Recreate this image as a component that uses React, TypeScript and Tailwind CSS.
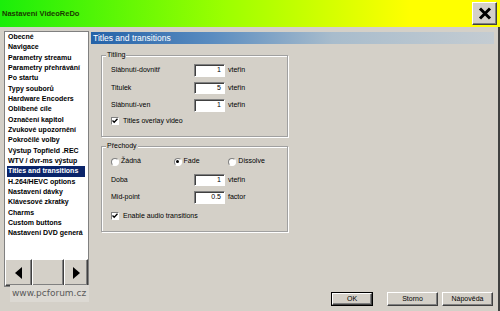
import React from "react";

const items = [
  "Obecné",
  "Navigace",
  "Parametry streamu",
  "Parametry přehrávání",
  "Po startu",
  "Typy souborů",
  "Hardware Encoders",
  "Oblíbené cíle",
  "Označení kapitol",
  "Zvukové upozornění",
  "Pokročilé volby",
  "Výstup Topfield .REC",
  "WTV / dvr-ms výstup",
  "Titles and transitions",
  "H.264/HEVC options",
  "Nastavení dávky",
  "Klávesové zkratky",
  "Charms",
  "Custom buttons",
  "Nastavení DVD generá",
];

const raised =
  "bg-[#d4d0c8] border border-t-white border-l-white border-r-[#404040] border-b-[#404040] shadow-[inset_-1px_-1px_0_#808080]";

function NumField({ label, value, unit }: { label: string; value: string; unit: string }) {
  return (
    <div className="flex items-center h-[17.5px]">
      <span className="w-[83px] pl-[9px] box-content">{label}</span>
      <div className="w-[31px] h-[12.5px] bg-white border border-t-[#808080] border-l-[#808080] border-r-white border-b-white shadow-[inset_1px_1px_0_#404040] flex items-center justify-end pr-[3px] text-[7px]">
        {value}
      </div>
      <span className="ml-[3px]">{unit}</span>
    </div>
  );
}

function Check({ label }: { label: string }) {
  return (
    <div className="flex items-center h-[14px] pl-[9px]">
      <div className="w-[8px] h-[8px] bg-white border border-t-[#808080] border-l-[#808080] border-r-white border-b-white flex items-center justify-center">
        <svg width="6" height="6" viewBox="0 0 6 6">
          <path d="M0.5 2.5 L2.2 4.3 L5.5 0.8" stroke="#000" strokeWidth="1.3" fill="none" />
        </svg>
      </div>
      <span className="ml-[4px]">{label}</span>
    </div>
  );
}

function Radio({ label, on, w }: { label: string; on?: boolean; w: string }) {
  return (
    <div className={`flex items-center ${w}`}>
      <div className="w-[8px] h-[8px] rounded-full bg-white border border-t-[#808080] border-l-[#808080] border-r-white border-b-white flex items-center justify-center">
        {on && <div className="w-[3px] h-[3px] rounded-full bg-black" />}
      </div>
      <span className="ml-[2px]">{label}</span>
    </div>
  );
}

function Group({ title, h, children }: { title: string; h: string; children: React.ReactNode }) {
  return (
    <div className={`relative ml-[10px] w-[187px] ${h} border border-[#a0a0a0] shadow-[1px_1px_0_#fff,inset_1px_1px_0_#fff]`}>
      <span className="absolute -top-[5px] left-[4px] px-[1px] bg-[#d4d0c8] leading-[8px]">{title}</span>
      {children}
    </div>
  );
}

export default function App() {
  return (
    <div className="w-[500px] h-[311px] bg-[#d4d0c8] flex flex-col overflow-hidden font-['Liberation_Sans',Arial,sans-serif] text-[7px] text-black">
      {/* Title bar */}
      <div className="h-[27px] flex items-center bg-[linear-gradient(to_right,#1aee0a_0%,#9cff00_45%,#ffff00_82%)] pl-[2px] pr-[3px]">
        <span className="font-bold text-[7.5px] text-[#1a3a00]">Nastavení VideoReDo</span>
        <div className={`ml-auto w-[25px] h-[23px] flex items-center justify-center ${raised}`}>
          <svg width="14" height="13" viewBox="0 0 14 13">
            <path d="M2 1.5 L12 11.5 M12 1.5 L2 11.5" stroke="#000" strokeWidth="3" />
          </svg>
        </div>
      </div>

      <div className="flex-1 flex pt-[4px] border-r-[2px] border-[#404040]">
        {/* Left list */}
        <div className="ml-[4px] w-[85px] shrink-0 flex flex-col">
          <div className="w-[85px] h-[256px] border border-[#808080] flex flex-col">
            <div className="h-[227px] bg-white pl-[3px] overflow-hidden">
              {items.map((it) => (
                <div
                  key={it}
                  className={`h-[10.33px] leading-[10.33px] font-bold whitespace-nowrap ${
                    it === "Titles and transitions" ? "bg-[#0a246a] text-white -ml-[1px] pl-[1px] mr-[3px]" : ""
                  }`}
                >
                  {it}
                </div>
              ))}
            </div>
            <div className="flex-1 flex">
              <div className={`w-[27px] flex items-center justify-center ${raised}`}>
                <svg width="7" height="12" viewBox="0 0 7 12">
                  <path d="M7 0 L0 6 L7 12 Z" fill="#000" />
                </svg>
              </div>
              <div className={`w-[32px] ${raised}`} />
              <div className={`flex-1 flex items-center justify-center ${raised}`}>
                <svg width="7" height="12" viewBox="0 0 7 12">
                  <path d="M0 0 L7 6 L0 12 Z" fill="#000" />
                </svg>
              </div>
            </div>
          </div>
          <div className="mt-[-2px] ml-[6px] w-[79px] h-[17px] bg-[#dcd9d3] flex items-center pl-[2px] whitespace-nowrap font-['DejaVu_Sans',sans-serif] text-[9px] text-[#5a5a5a]">
            www.pcforum.cz
          </div>
        </div>

        {/* Right pane */}
        <div className="ml-[2px] w-[403px] flex flex-col">
          <div className="h-[12px] mt-[1px] bg-[linear-gradient(to_right,#2462a8_0%,#5a8cc0_30%,#a8bccc_60%,#c4ccd2_100%)] text-white text-[8.5px] leading-[12px] pl-[2px]">
            Titles and transitions
          </div>

          <div className="mt-[11px]">
            <Group title="Titling" h="h-[82px]">
              <div className="pt-[5.5px]">
                <NumField label="Slábnutí-dovnitř" value="1" unit="vteřin" />
                <NumField label="Titulek" value="5" unit="vteřin" />
                <NumField label="Slábnutí-ven" value="1" unit="vteřin" />
                <Check label="Titles overlay video" />
              </div>
            </Group>
          </div>

          <div className="mt-[9px]">
            <Group title="Přechody" h="h-[86px]">
              <div className="pt-[8px]">
                <div className="flex items-center h-[13px] pl-[9px]">
                  <Radio label="Žádná" w="w-[64px]" />
                  <Radio label="Fade" on w="w-[56px]" />
                  <Radio label="Dissolve" w="w-[60px]" />
                </div>
                <div className="mt-[3px]">
                  <NumField label="Doba" value="1" unit="vteřin" />
                  <NumField label="Mid-point" value="0.5" unit="factor" />
                </div>
                <div className="mt-[3px]">
                  <Check label="Enable audio transitions" />
                </div>
              </div>
            </Group>
          </div>

          <div className="mt-auto mb-[5px] flex justify-end pr-[1px] h-[14px]">
            <div className="w-[42px] border border-black">
              <div className={`h-full flex items-center justify-center ${raised}`}>OK</div>
            </div>
            <div className={`ml-[14px] w-[51px] flex items-center justify-center ${raised}`}>Storno</div>
            <div className={`ml-[4px] w-[51px] flex items-center justify-center ${raised}`}>Nápověda</div>
          </div>
        </div>
      </div>
    </div>
  );
}
